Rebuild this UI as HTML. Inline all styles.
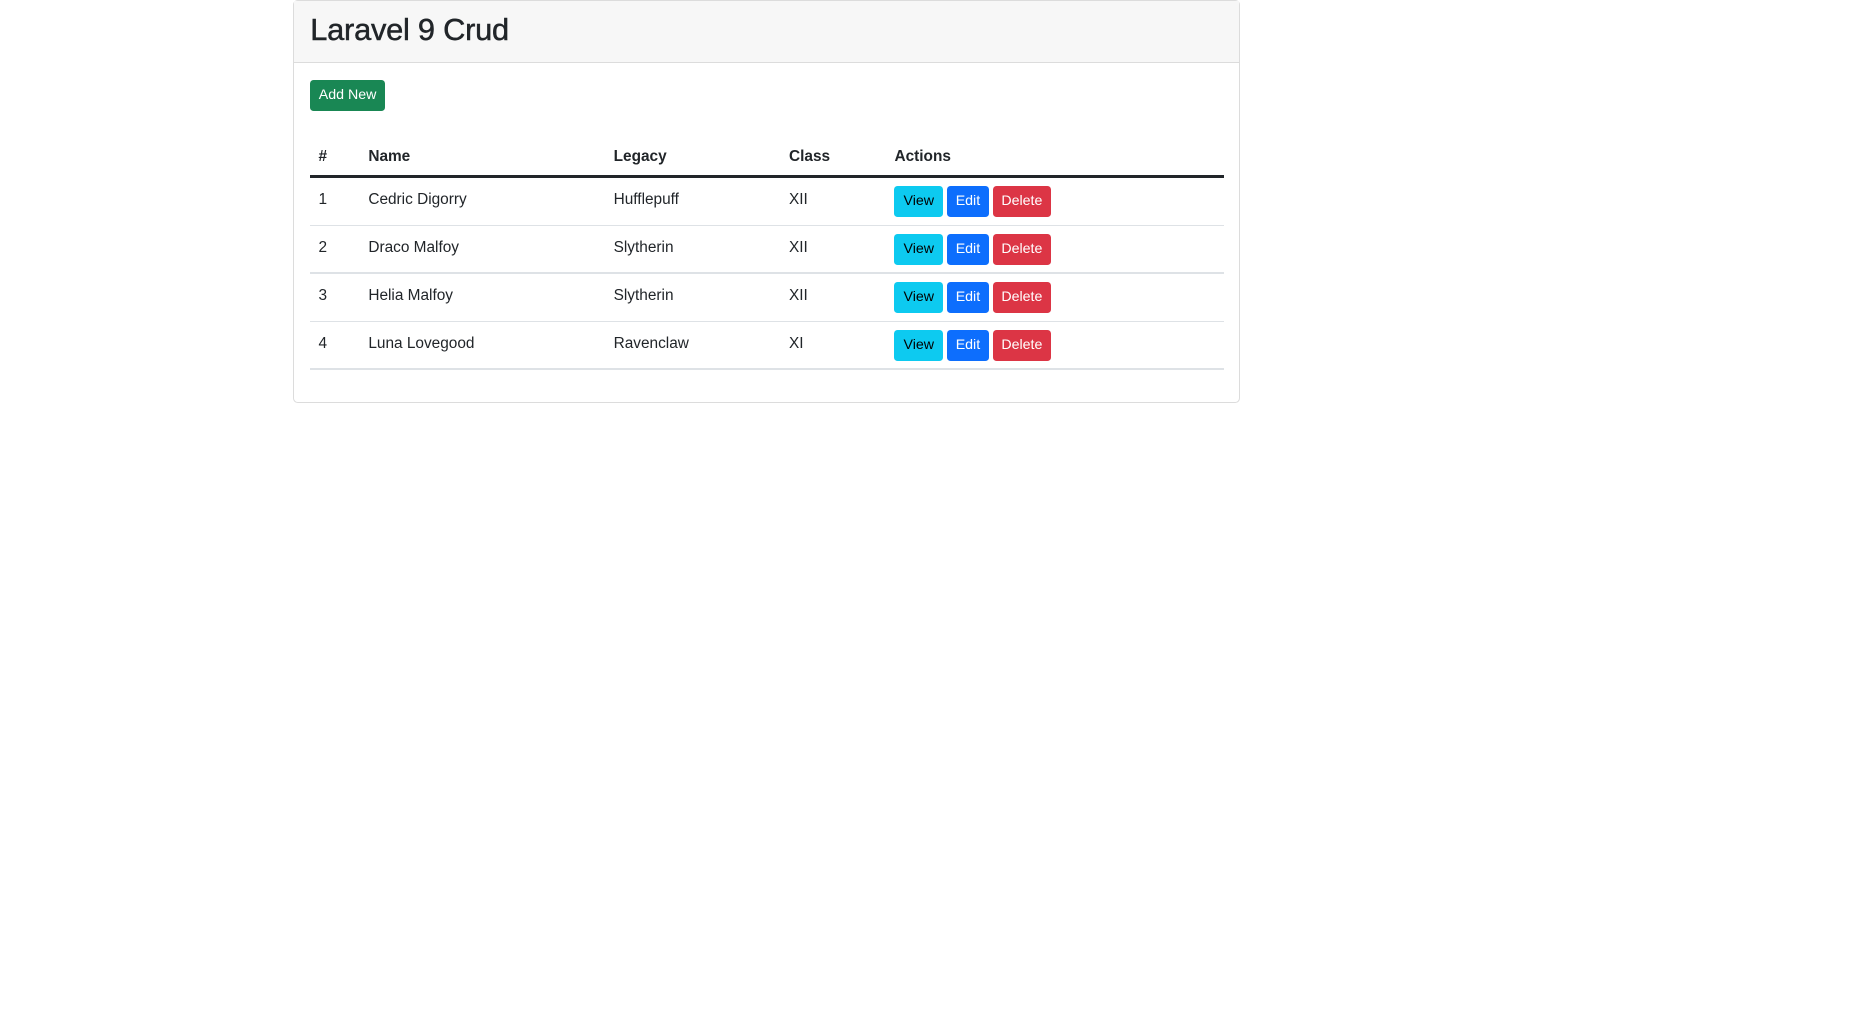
<!DOCTYPE html>
<html><head><meta charset="utf-8"><style>
html,body{margin:0;padding:0;background:#fff}
body{zoom:1.185;font-family:"Liberation Sans",sans-serif;color:#212529;width:1568px;height:852px;position:relative;overflow:hidden}
.card{position:absolute;left:247px;top:0;width:798px;height:338px;border:1px solid #dcdcdc;border-radius:4px}
.hd{height:52px;background:#f7f7f7;border-bottom:1px solid #dcdcdc;box-sizing:border-box}
.hd h3{margin:0;position:absolute;left:14px;top:8px;font-size:26px;font-weight:normal;line-height:34px;letter-spacing:-0.2px;-webkit-text-stroke:0.4px #212529}
.btn{position:absolute;height:26px;line-height:26px;color:#fff;font-size:12px;text-align:center;border-radius:3px}
.add{left:14px;top:67px;width:63px;background:#198754}
.row{position:absolute;left:14px;width:771px;font-size:13px}
.c{position:absolute}
.h{font-weight:bold}
.line{position:absolute;left:14px;width:771px;height:1px;background:#dee2e6}
</style></head><body>
<div class="card">
<div class="hd"><h3>Laravel 9 Crud</h3></div>
<div class="btn add">Add New</div>
<div class="row h" style="top:124px"><span class="c" style="left:7px">#</span><span class="c" style="left:49px">Name</span><span class="c" style="left:256px">Legacy</span><span class="c" style="left:404px">Class</span><span class="c" style="left:493px">Actions</span></div>
<div class="line" style="top:147px;height:2px;background:#212529"></div>

<div class="row" style="top:160px"><span class="c" style="left:7px">1</span><span class="c" style="left:49px">Cedric Digorry</span><span class="c" style="left:256px">Hufflepuff</span><span class="c" style="left:404px">XII</span></div>
<div class="btn" style="left:507px;top:156px;width:41px;background:#0dcaf0;color:#000">View</div><div class="btn" style="left:551px;top:156px;width:36px;background:#0d6efd">Edit</div><div class="btn" style="left:590px;top:156px;width:49px;background:#dc3545">Delete</div>
<div class="line" style="top:189px"></div>

<div class="row" style="top:201px"><span class="c" style="left:7px">2</span><span class="c" style="left:49px">Draco Malfoy</span><span class="c" style="left:256px">Slytherin</span><span class="c" style="left:404px">XII</span></div>
<div class="btn" style="left:507px;top:197px;width:41px;background:#0dcaf0;color:#000">View</div><div class="btn" style="left:551px;top:197px;width:36px;background:#0d6efd">Edit</div><div class="btn" style="left:590px;top:197px;width:49px;background:#dc3545">Delete</div>
<div class="line" style="top:229px"></div>

<div class="row" style="top:241px"><span class="c" style="left:7px">3</span><span class="c" style="left:49px">Helia Malfoy</span><span class="c" style="left:256px">Slytherin</span><span class="c" style="left:404px">XII</span></div>
<div class="btn" style="left:507px;top:237px;width:41px;background:#0dcaf0;color:#000">View</div><div class="btn" style="left:551px;top:237px;width:36px;background:#0d6efd">Edit</div><div class="btn" style="left:590px;top:237px;width:49px;background:#dc3545">Delete</div>
<div class="line" style="top:270px"></div>

<div class="row" style="top:282px"><span class="c" style="left:7px">4</span><span class="c" style="left:49px">Luna Lovegood</span><span class="c" style="left:256px">Ravenclaw</span><span class="c" style="left:404px">XI</span></div>
<div class="btn" style="left:507px;top:278px;width:41px;background:#0dcaf0;color:#000">View</div><div class="btn" style="left:551px;top:278px;width:36px;background:#0d6efd">Edit</div><div class="btn" style="left:590px;top:278px;width:49px;background:#dc3545">Delete</div>
<div class="line" style="top:310px"></div>
</div>
</body></html>
